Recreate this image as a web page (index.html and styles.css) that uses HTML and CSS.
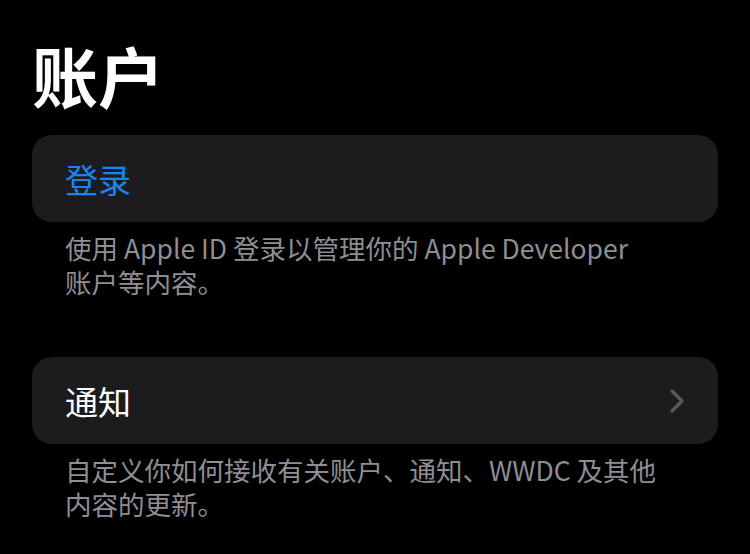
FILE: index.html
```html
<!DOCTYPE html>
<html lang="zh-CN">
<head>
<meta charset="utf-8">
<title>账户</title>
<link rel="stylesheet" href="styles.css">
</head>
<body>
<main class="page">
  <h1 class="title">账户</h1>
  <section class="group">
    <div class="card">
      <span class="card-label link">登录</span>
    </div>
    <p class="footer">使用 Apple ID 登录以管理你的 Apple Developer<br>账户等内容。</p>
  </section>
  <section class="group">
    <div class="card">
      <span class="card-label">通知</span>
      <svg class="chevron" width="16" height="26" viewBox="0 0 16 26" aria-hidden="true">
        <path d="M3 3 L13 13 L3 23" fill="none" stroke="#5a5a5f" stroke-width="3.2" stroke-linecap="round" stroke-linejoin="round"/>
      </svg>
    </div>
    <p class="footer">自定义你如何接收有关账户、通知、WWDC 及其他<br>内容的更新。</p>
  </section>
</main>
</body>
</html>
```

FILE: styles.css
```css
html, body {
  margin: 0;
  padding: 0;
  background: #000;
  height: 100%;
}
body {
  font-family: "Noto Sans CJK SC", "Noto Sans", sans-serif;
  color: #fff;
  overflow: hidden;
}
.page {
  padding: 0 32px;
}
.title {
  margin: 0;
  height: 135px;
  box-sizing: border-box;
  padding-top: 30px;
  font-size: 66px;
  line-height: 88px;
  font-weight: 700;
  color: #fff;
}
.group {
  margin-bottom: 58px;
}
.card {
  background: #1c1c1e;
  border-radius: 20px;
  height: 87px;
  display: flex;
  align-items: center;
  justify-content: space-between;
  padding: 0 33px;
}
.card-label {
  font-size: 33px;
  line-height: 40px;
  color: #fff;
}
.card-label.link {
  color: #1a84f0;
}
.chevron {
  display: block;
}
.footer {
  margin: 0;
  padding: 9px 33px 0;
  font-size: 26.5px;
  line-height: 34px;
  color: #8e8e93;
}
```
